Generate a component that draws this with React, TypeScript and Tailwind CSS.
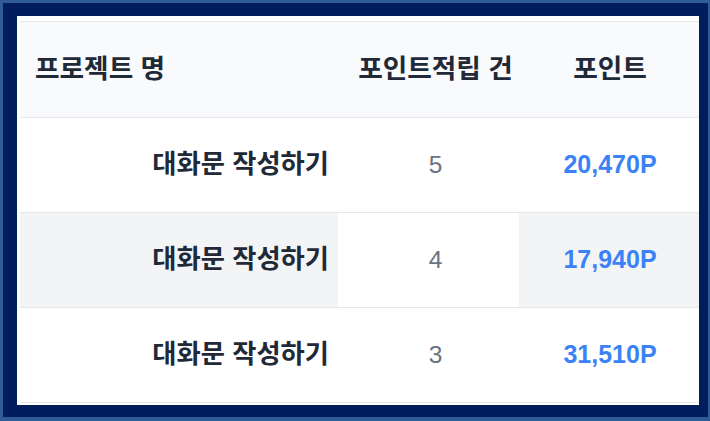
import React from 'react';

const rows = [
  { name: '대화문 작성하기', count: 5, point: '20,470P' },
  { name: '대화문 작성하기', count: 4, point: '17,940P' },
  { name: '대화문 작성하기', count: 3, point: '31,510P' },
];

export default function App() {
  return (
    <div
      className="w-[710px] h-[421px] bg-[#2f5c96] pt-[3px] pl-[3px] pr-[2px] pb-[4px]"
      style={{ fontFamily: '"Liberation Sans", "Noto Sans CJK KR", sans-serif' }}
    >
      <div className="w-full h-full bg-[#021d5c] pt-[13px] pl-[14px] pr-[9px] pb-[12px]">
        <div className="w-full h-full bg-white overflow-hidden pt-[5px] pl-[3px]">
          <div className="w-[681px] border-t border-[#e5e7eb]">
            <div className="grid grid-cols-[318px_181px_182px] h-[96px] items-center bg-[#f9fafb] border-b border-[#e5e7eb] text-[26.7px] font-bold text-[#1f2937]">
              <div className="pl-[15px]">프로젝트 명</div>
              <div className="pl-[14px] text-center">포인트적립 건</div>
              <div className="text-center">포인트</div>
            </div>
            {rows.map((r, i) => (
              <div
                key={i}
                className={`grid grid-cols-[318px_181px_182px] h-[95px] border-b border-[#e5e7eb] ${i === 1 ? 'bg-[#f3f4f6]' : 'bg-white'}`}
              >
                <div className="flex items-center justify-end pr-[9px] text-[26.3px] font-semibold text-[#1f2937]">{r.name}</div>
                <div className="flex items-center justify-center pl-[14px] bg-white text-[24.5px] text-[#6b7280]">{r.count}</div>
                <div className="flex items-center justify-center text-[25px] font-bold text-[#3b82f6]">{r.point}</div>
              </div>
            ))}
          </div>
        </div>
      </div>
    </div>
  );
}
